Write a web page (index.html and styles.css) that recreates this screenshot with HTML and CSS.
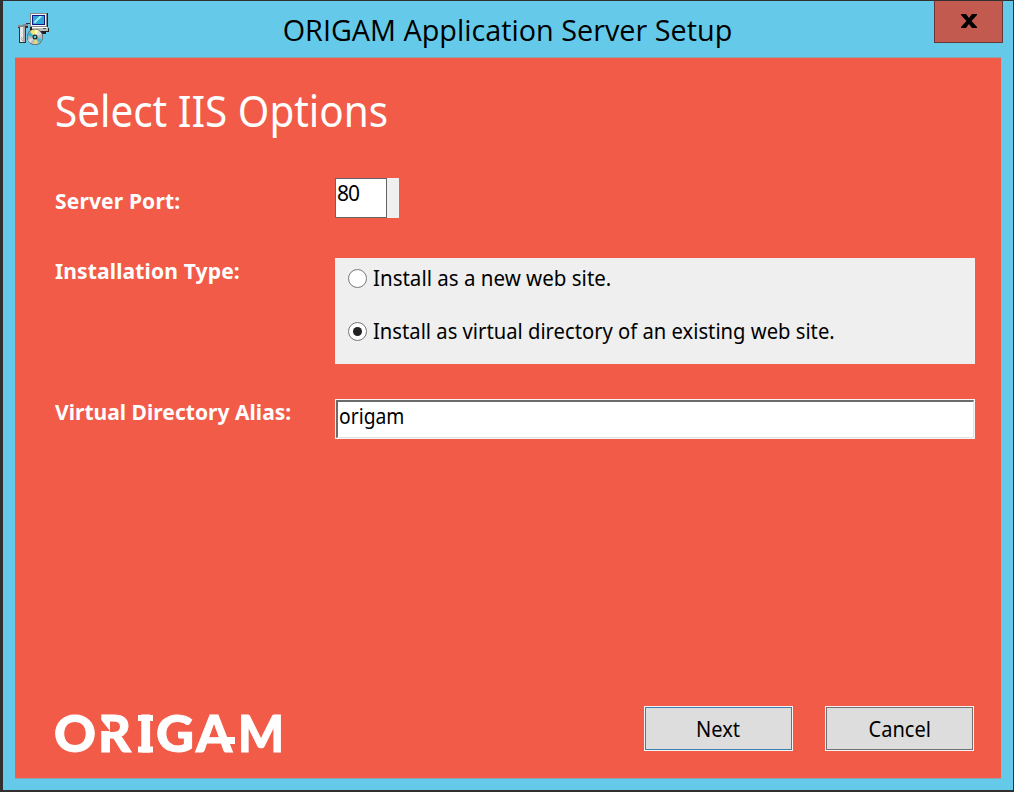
FILE: index.html
```html
<!DOCTYPE html>
<html lang="en">
<head>
<meta charset="utf-8">
<title>ORIGAM Application Server Setup</title>
<link rel="stylesheet" href="styles.css">
</head>
<body>
<div class="window">
  <header class="titlebar">
    <svg class="app-icon" width="32" height="32" viewBox="0 0 32 32" shape-rendering="crispEdges">
      <path d="M1 13h5v-1h3v-2h4v1h-2v4h-2v15H2V15H1z" fill="#333"/>
      <path d="M1 12h5v-1h5v2H8v1H1z" fill="#888"/>
      <path d="M3 14h5v15H3z" fill="#e6e6e6"/>
      <path d="M6 14h2v15H6z" fill="#aaa"/>
      <path d="M4 24h1v1H4zm1 1h1v1H5zm-1 1h1v1H4zm1 1h1v1H5z" fill="#aaa"/>
      <path d="M13 0h18v15h1v4h-3v2H17v-3h-4z" fill="#222"/>
      <path d="M13 0h17v14H13z" fill="#888"/>
      <path d="M14 1h15v12H14z" fill="#f5f5f5"/>
      <path d="M15 2h13v10H15z" fill="#101a88"/>
      <path d="M16 3h11v8H16z" fill="#32a8d8"/>
      <path d="M22 3h3v1h-1v1h-1v1h-1v1h-1v1h-1v1h-1v1h-2V8h1V7h1V6h1V5h1V4h1z" fill="#9be4f4"/>
      <path d="M15 14h16v4H15z" fill="#bbb"/>
      <path d="M15 14h15v1H15z" fill="#fff"/>
      <path d="M26 15h3v1h-3z" fill="#555"/>
      <g shape-rendering="auto">
        <circle cx="18" cy="24" r="8" fill="#444"/>
        <circle cx="18" cy="24" r="7.500" fill="#bbb"/>
        <path d="M18 24L13 18l5-1.500z" fill="#eeea77"/>
        <path d="M18 24v-7.500l4 1z" fill="#fffbc0"/>
        <path d="M18 24l-7.500-1 2-4z" fill="#3bb5ca"/>
        <path d="M18 24l4-6 3 3z" fill="#ddd"/>
        <path d="M18 24l-7 3 2 3z" fill="#ddd"/>
        <path d="M18 24l7 2-3 4z" fill="#43bad0"/>
        <path d="M18 24l3 6-4 1z" fill="#e4de70"/>
        <circle cx="18" cy="24" r="2.500" fill="#222"/>
        <circle cx="18" cy="24" r="1.300" fill="#65caea"/>
      </g>
    </svg>
    <h1 class="caption"><span>ORIGAM Application Server Setup</span></h1>
    <button class="close" aria-label="Close">
      <svg width="16" height="14" viewBox="0 0 16 14"><path d="M0 0h5l3 4L11 0h5v1l-5.500 6 5.500 6v1h-5L8 10 5 14H0v-1l5.500-6L0 1z"/></svg>
    </button>
  </header>
  <main class="page">
    <h2 class="heading"><span>Select IIS Options</span></h2>
    <div class="row row-port">
      <label class="label">Server Port:</label>
      <div class="port"><div class="port-value">80</div></div>
    </div>
    <div class="row row-type">
      <label class="label">Installation Type:</label>
      <div class="options">
        <div class="option"><i class="radio"></i><span>Install as a new web site.</span></div>
        <div class="option"><i class="radio checked"></i><span>Install as virtual directory of an existing web site.</span></div>
      </div>
    </div>
    <div class="row row-alias">
      <label class="label">Virtual Directory Alias:</label>
      <div class="field"><div class="field-inner"><span>origam</span></div></div>
    </div>
    <footer class="footer">
      <svg class="logo" width="240" height="64" viewBox="0 -10 240 64">
        <g class="wordmark">
          <text x="-1" y="39.500" textLength="42" lengthAdjust="spacingAndGlyphs">O</text>
          <text x="43" y="39.500" textLength="33" lengthAdjust="spacingAndGlyphs">R</text>
          <text x="83" y="39.500">I</text>
          <text x="101" y="39.500" textLength="38" lengthAdjust="spacingAndGlyphs">G</text>
          <text x="141" y="39.500" textLength="36" lengthAdjust="spacingAndGlyphs">A</text>
          <text x="183" y="39.500" textLength="46" lengthAdjust="spacingAndGlyphs">M</text>
        </g>
        <path class="serif" d="M83 3h15v6H83zM83 34.500h15v6H83zM168 25h12v7h-12z"/>
        <path class="cut" d="M44 5v14h11z"/>
      </svg>
      <button class="button primary"><span>Next</span></button>
      <button class="button"><span>Cancel</span></button>
    </footer>
  </main>
</div>
</body>
</html>
```
FILE: styles.css
```css
* { box-sizing: border-box; }
body { margin: 0; font-family: "Noto Sans", sans-serif; font-size: 21px; color: #000; }
button { font: inherit; padding: 0; color: #000; }
h1, h2 { margin: 0; font-weight: 400; }
span { white-space: nowrap; display: inline-block; transform-origin: 0 50%; }

.window {
  width: 1014px; height: 792px;
  display: flex; flex-direction: column;
  background: #65caea;
  border: solid #303030; border-width: 1px 1px 2px 3px;
  padding: 0 12px 11px 12px;
}
.titlebar { height: 56px; flex: none; display: grid; grid-template-columns: 32px 1fr 69px; margin-right: -2px; margin-left: 2px; }
.app-icon { margin-top: 12px; }
.caption { font-family: "Open Sans", sans-serif; font-size: 28.800px; line-height: 38px; padding-top: 10px; text-align: center; padding-left: 32px; }
.close { width: 69px; height: 43px; margin-top: -1px; background: #c35a50; border: 1px solid #633836; border-top-color: #303030; display: flex; justify-content: center; padding-top: 13px; align-items: flex-start; }

.page {
  flex: 1; display: flex; flex-direction: column;
  background: #f25b48;
  border: solid #8fa3ae; border-width: 1px 0;
  padding: 0 27px 27px 40px;
}
.heading { color: #fff; font-size: 43px; line-height: 58px; height: 120px; padding-top: 24px; }
.heading span { transform: scaleX(0.94); }
.row { display: grid; grid-template-columns: 280px 640px; }
.label { color: #fff; font-weight: 700; font-size: 21px; line-height: 30px; letter-spacing: 0.15px; }
.row-port { height: 80px; }
.row-port .label { padding-top: 8px; }
.port { width: 64px; height: 40px; background: #efefef; }
.port-value { width: 52px; height: 40px; background: #fff; border: 1px solid #646464; line-height: 29px; padding-left: 1px; letter-spacing: -1px; }
.row-type { height: 142px; }
.row-type .label { margin-top: -2px; }
.options { height: 106px; background: #efefef; padding: 5px 0 0 13px; }
.option { height: 53px; display: flex; gap: 6px; line-height: 31px; }
.option span { transform: scaleX(0.962); }
.option:first-child span { transform: scaleX(0.977); }
.radio { width: 19px; height: 19px; margin-top: 6px; flex: none; border: 1px solid #777; border-radius: 50%; background: #fff; display: grid; place-items: center; }
.checked::after { content: ""; width: 9px; height: 9px; border-radius: 50%; background: #222; }
.row-alias .label { margin-top: -3px; letter-spacing: 0.030px; }
.field { height: 40px; margin-top: -1px; border: 1px solid #f4f4f4; }
.field-inner { height: 38px; background: #fff; border: solid; border-width: 2px 1px 1px 2px; border-color: #6b6b6b #e3e3e3 #e3e3e3 #6b6b6b; line-height: 29px; padding-left: 1px; }
.field-inner span { transform: scaleX(0.92); }

.footer { margin-top: auto; display: flex; align-items: flex-end; }
.logo { margin-right: auto; margin-bottom: -15px; }
.wordmark { font-family: Lato, sans-serif; font-weight: 900; font-size: 51px; fill: #fff; stroke: #fff; stroke-width: 1px; }
.serif { fill: #fff; }
.cut { fill: #f25b48; }
.button { width: 149px; height: 45px; background: #ddd; border: 1px solid #f5f5f5; box-shadow: inset 0 0 0 1px #707070; }
.primary { box-shadow: inset 0 0 0 1px #3c7fb1; margin-right: 32px; }
.button span { transform-origin: 50% 50%; transform: scaleX(0.955); }
```
